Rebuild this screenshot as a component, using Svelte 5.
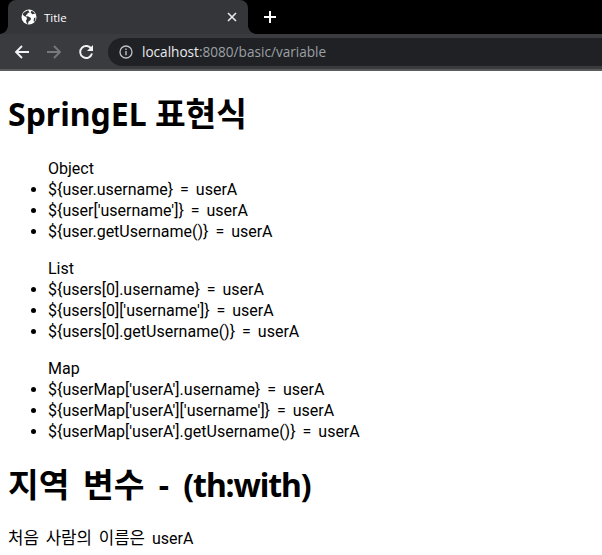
<script>
    const sections = [
        {
            title: "Object",
            items: ["${user.username} = userA", "${user['username']} = userA", "${user.getUsername()} = userA"]
        },
        {
            title: "List",
            items: ["${users[0].username} = userA", "${users[0]['username']} = userA", "${users[0].getUsername()} = userA"]
        },
        {
            title: "Map",
            items: ["${userMap['userA'].username} = userA", "${userMap['userA']['username']} = userA", "${userMap['userA'].getUsername()} = userA"]
        }
    ];
</script>

<div class="chrome">
    <div class="tabstrip">
        <div class="tab">
            <svg class="favicon" viewBox="0 0 16 16" width="16" height="16">
                <circle cx="8" cy="8" r="7.5" fill="#fff" />
                <path d="M7 1.2C5 2 3 3 1.6 5.2L3 7l2.4 1 .6 2-1 1.6.8 2.9 1.2.4.6-2.4 2-1.6.4-2-3.2-1.6-1.4.2L4.800 6l1.400-.6.600-1.400 1.800-.4z" fill="#35363a" />
                <path d="M10.500 1.800l-.8 1.800 1.600 1.600 2.700-.4c-.8-1.300-2.100-2.400-3.500-3zM14.500 8.500l-1.500.5-.4 3 .6 1c.9-1.200 1.400-2.800 1.300-4.500z" fill="#35363a" />
            </svg>
            <span class="tab-title">Title</span>
            <svg class="tab-close" viewBox="0 0 10 10" width="10" height="10">
                <path d="M1 1l8 8M9 1l-8 8" stroke="#e8eaed" stroke-width="1.600" fill="none" />
            </svg>
        </div>
        <svg class="new-tab" viewBox="0 0 12 12" width="12" height="12">
            <path d="M6 0v12M0 6h12" stroke="#fff" stroke-width="2" fill="none" />
        </svg>
    </div>
    <div class="toolbar">
        <svg class="nav" viewBox="0 0 16 16" width="16" height="16">
            <path d="M15 8H2M8 2L2 8l6 6" stroke="#f1f3f4" stroke-width="1.800" fill="none" />
        </svg>
        <svg class="nav" viewBox="0 0 16 16" width="16" height="16">
            <path d="M1 8h13M8 2l6 6-6 6" stroke="#77797c" stroke-width="1.800" fill="none" />
        </svg>
        <svg class="nav" viewBox="0 0 16 16" width="16" height="16">
            <path d="M13.400 5A6 6 0 1 0 14 9.500" stroke="#f1f3f4" stroke-width="1.900" fill="none" />
            <path d="M15 1v6H9z" fill="#f1f3f4" />
        </svg>
        <div class="omnibox">
            <svg class="info" viewBox="0 0 14 14" width="14" height="14">
                <circle cx="7" cy="7" r="6" stroke="#bdc1c6" stroke-width="1.300" fill="none" />
                <path d="M7 6v4.200M7 3.600v1.400" stroke="#bdc1c6" stroke-width="1.400" fill="none" />
            </svg>
            <span class="host">localhost</span><span class="path">:8080/basic/variable</span>
        </div>
    </div>
</div>

<main>
    <h1 class="first">SpringEL <span class="ko">표현식</span></h1>
    {#each sections as section}
        <ul>
            <li class="head">{section.title}</li>
            {#each section.items as item}
                <li>{item}</li>
            {/each}
        </ul>
    {/each}
    <h1 class="second"><span class="ko">지역 변수</span> - <span class="narrow">(th:with)</span></h1>
    <p><span class="ko">처음 사람의 이름은</span> userA</p>
</main>

<style>
    :global(body) {
        background: #fff;
        overflow: hidden;
    }

    .chrome {
        font-family: "Open Sans", "Noto Sans", sans-serif;
        border-bottom: 2px solid #5a5b5d;
    }

    .tabstrip {
        height: 34px;
        background: #000;
        display: flex;
        align-items: center;
        padding-left: 8px;
    }

    .tab {
        position: relative;
        width: 240px;
        height: 34px;
        box-sizing: border-box;
        background: #35363a;
        border-radius: 8px 8px 0 0;
        display: flex;
        align-items: center;
        padding: 0 11px 0 13px;
        color: #fff;
        font-size: 11.5px;
    }

    /* flared bottom corners of the active tab */
    .tab::before,
    .tab::after {
        content: "";
        position: absolute;
        bottom: 0;
        width: 8px;
        height: 8px;
    }

    .tab::before {
        left: -8px;
        background: radial-gradient(circle at 0 0, #000 7.5px, #35363a 8px);
    }

    .tab::after {
        right: -8px;
        background: radial-gradient(circle at 100% 0, #000 7.5px, #35363a 8px);
    }

    .tab-title {
        margin-left: 7px;
        flex: 1;
    }

    .new-tab {
        margin-left: 16px;
    }

    .toolbar {
        height: 35px;
        background: #3a3b3e;
        display: flex;
        align-items: center;
        padding-left: 14px;
    }

    .nav {
        margin-right: 16px;
    }

    .nav:nth-of-type(3) {
        margin-right: 14px;
    }

    .omnibox {
        flex: 1;
        height: 28px;
        padding-left: 11px;
        background: #202124;
        border-radius: 14px 0 0 14px;
        display: flex;
        align-items: center;
        font-size: 13.6px;
    }

    .info {
        margin-right: 9px;
    }

    .host {
        color: #e8eaed;
    }

    .path {
        color: #9aa0a6;
    }

    main {
        font-family: Roboto, "Noto Sans CJK KR", sans-serif;
        font-size: 16px;
        word-spacing: 3px;
        color: #000;
        padding: 0 8px;
    }

    .ko {
        font-family: "Noto Sans CJK KR", sans-serif;
        font-size: 16.8px;
    }

    h1 {
        font-family: "Noto Sans", "Noto Sans CJK KR", sans-serif;
        font-size: 32px;
        font-weight: 700;
        line-height: 43px;
    }

    .first {
        word-spacing: 0;
        margin: 19px 0 23px;
    }

    .second {
        word-spacing: 6px;
        margin: 19px 0 21px;
    }

    h1 .ko {
        font-size: 33.4px;
        font-weight: 700;
    }

    .narrow {
        letter-spacing: -1.1px;
    }

    ul {
        margin: 16px 0;
        padding-left: 40px;
    }

    li {
        line-height: 21px;
    }

    .head {
        list-style: none;
    }

    p {
        margin: 16px 0;
        line-height: 21px;
    }
</style>
